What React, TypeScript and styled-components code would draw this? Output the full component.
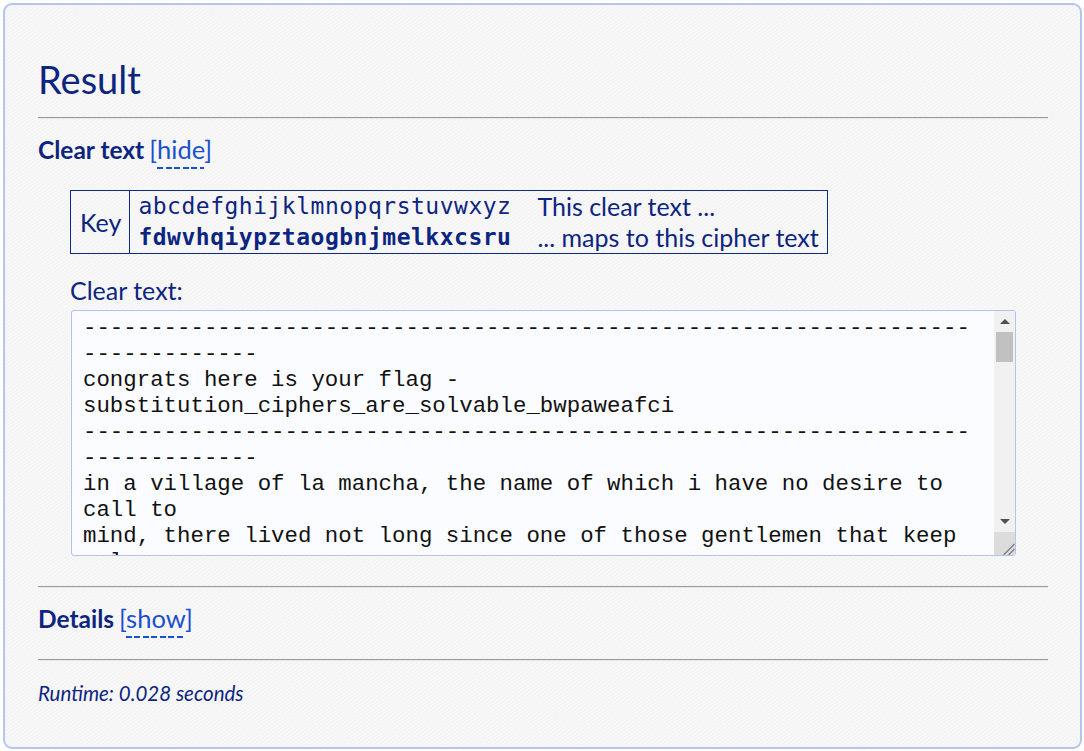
import React from "react";
import styled, { createGlobalStyle } from "styled-components";

const GlobalStyle = createGlobalStyle`
  html, body {
    margin: 0;
    padding: 0;
    background: #ffffff;
  }
  body {
    font-family: Lato, "Noto Sans", sans-serif;
    color: #0c2580;
  }
`;

const Page = styled.div`
  padding: 3px 2px 2px 3px;
`;

const Card = styled.section`
  border: 2px solid #b5c5ef;
  border-radius: 9px;
  background-color: #f6f6f7;
  background-image: repeating-linear-gradient(
    -35deg,
    rgba(255, 255, 255, 0.25) 0px,
    rgba(255, 255, 255, 0.25) 1px,
    rgba(232, 232, 234, 0.18) 2px,
    rgba(232, 232, 234, 0.18) 3px
  );
  padding: 52px 32px 40px 33px;
  min-height: 746px;
  box-sizing: border-box;
`;

const Title = styled.h1`
  margin: 0;
  font-family: Lato, "Noto Sans", sans-serif;
  font-weight: 400;
  font-size: 38px;
  line-height: 44px;
  color: #0c2580;
`;

const Rule = styled.hr<{ $top: number }>`
  margin: ${(p) => p.$top}px 0 0 0;
  border: 0;
  height: 1px;
  background: #9b9b9b;
  border-bottom: 1px solid #e9e9eb;
`;

const SectionHead = styled.div<{ $top: number }>`
  margin-top: ${(p) => p.$top}px;
  font-size: 24.5px;
  line-height: 30px;
  font-weight: 700;
  color: #0c2580;
  display: flex;
  align-items: baseline;
  gap: 5px;
`;

const Toggle = styled.span`
  font-weight: 400;
  font-size: 25.5px;
  color: #1a4fcf;
`;

const ToggleWord = styled.span`
  padding-bottom: 5px;
  background-image: repeating-linear-gradient(
    to right,
    #1a4fd8 0px,
    #1a4fd8 6px,
    transparent 6px,
    transparent 8.5px
  );
  background-size: 100% 2px;
  background-repeat: no-repeat;
  background-position: 0 100%;
`;

const SectionBody = styled.div`
  padding-left: 32px;
`;

const KeyTable = styled.table`
  margin-top: 25px;
  border-collapse: collapse;
  border: 1px solid #0f2a82;
  font-size: 25px;
  color: #0c2580;
`;

const KeyLabel = styled.td`
  border-right: 1px solid #0f2a82;
  padding: 0 8px 0 9px;
  vertical-align: middle;
  line-height: 31px;
`;

const MonoCell = styled.td<{ $bold?: boolean }>`
  font-family: "DejaVu Sans Mono", "Liberation Mono", monospace;
  font-size: 23px;
  letter-spacing: 0.5px;
  font-weight: ${(p) => (p.$bold ? 700 : 400)};
  padding: 0 0 0 8px;
  line-height: 31px;
  white-space: nowrap;
`;

const DescCell = styled.td`
  padding: 0 8px 0 26px;
  line-height: 31px;
  white-space: nowrap;
`;

const FieldLabel = styled.div`
  margin-top: 21px;
  font-size: 25px;
  line-height: 30px;
  color: #0c2580;
`;

const TextFrame = styled.div`
  display: flex;
  margin-top: 5px;
  margin-left: 1px;
  width: 945px;
  height: 246px;
  box-sizing: border-box;
  border: 1px solid #b3c3ef;
  border-radius: 3px;
  background: #fbfcff;
  overflow: hidden;
`;

const TextBox = styled.textarea`
  flex: 1;
  min-width: 0;
  height: 100%;
  box-sizing: border-box;
  margin: 0;
  padding: 4px 14px 0 11px;
  border: 0;
  background: transparent;
  color: #111111;
  font-family: "Liberation Mono", "DejaVu Sans Mono", monospace;
  font-size: 22.4px;
  line-height: 26px;
  outline: none;
  resize: none;
  overflow: hidden;
`;

const ScrollBar = styled.div`
  width: 21px;
  flex: none;
  display: flex;
  flex-direction: column;
  background: #f1f1f1;
`;

const ScrollButton = styled.div`
  height: 21px;
  flex: none;
  display: flex;
  align-items: center;
  justify-content: center;
`;

const ScrollTrack = styled.div`
  flex: 1;
  display: flex;
  flex-direction: column;
  padding: 0 2px;
`;

const ScrollThumb = styled.div`
  height: 30px;
  background: #c1c1c1;
`;

const Resizer = styled.div`
  height: 23px;
  flex: none;
  background: #dcdcdc;
  display: flex;
  align-items: flex-end;
  justify-content: flex-end;
`;

const Runtime = styled.div`
  margin-top: 20px;
  font-style: italic;
  font-size: 20.5px;
  line-height: 24px;
  color: #0c2580;
`;

const dashes = "-".repeat(79);

const clearText = `${dashes}
congrats here is your flag - substitution_ciphers_are_solvable_bwpaweafci
${dashes}
in a village of la mancha, the name of which i have no desire to call to
mind, there lived not long since one of those gentlemen that keep a lance
in the lance-rack, an old buckler, a lean hack, and a greyhound for
coursing. an olla of rather more beef than mutton, a salad on most
nights, scraps on saturdays, lentils on fridays, and a pigeon or so extra
on sundays, made away with three-quarters of his income. the rest of it
went in a doublet of fine cloth and velvet breeches and shoes to match
for holidays, while on week-days he made a brave figure in his best
homespun. he had in his house a housekeeper past forty, a niece under
twenty, and a lad for the field and market-place, who used to saddle the
hack as well as handle the bill-hook. the age of this gentleman of ours
was bordering on fifty; he was of a hardy habit, spare, gaunt-featured, a
very early riser and a great sportsman.
`;

export default function App() {
  return (
    <>
      <GlobalStyle />
      <Page>
        <Card>
          <Title>Result</Title>
          <Rule $top={16} />
          <SectionHead $top={15}>
            <span>Clear text</span>
            <Toggle>
              [<ToggleWord>hide</ToggleWord>]
            </Toggle>
          </SectionHead>
          <SectionBody>
            <KeyTable>
              <tbody>
                <tr>
                  <KeyLabel rowSpan={2}>Key</KeyLabel>
                  <MonoCell>abcdefghijklmnopqrstuvwxyz</MonoCell>
                  <DescCell>This clear text ...</DescCell>
                </tr>
                <tr>
                  <MonoCell $bold>fdwvhqiypztaogbnjmelkxcsru</MonoCell>
                  <DescCell>... maps to this cipher text</DescCell>
                </tr>
              </tbody>
            </KeyTable>
            <FieldLabel>Clear text:</FieldLabel>
            <TextFrame>
              <TextBox readOnly defaultValue={clearText} spellCheck={false} />
              <ScrollBar>
                <ScrollButton>
                  <svg width="10" height="5" viewBox="0 0 10 5">
                    <path d="M0 5 L5 0 L10 5 Z" fill="#505050" />
                  </svg>
                </ScrollButton>
                <ScrollTrack>
                  <ScrollThumb />
                </ScrollTrack>
                <ScrollButton>
                  <svg width="10" height="5" viewBox="0 0 10 5">
                    <path d="M0 0 L10 0 L5 5 Z" fill="#505050" />
                  </svg>
                </ScrollButton>
                <Resizer>
                  <svg width="21" height="23" viewBox="0 0 21 23">
                    <path
                      d="M20.5 12 L9.5 23 M20.5 17 L14.5 23"
                      stroke="#7d7d7d"
                      strokeWidth="1.3"
                      fill="none"
                    />
                  </svg>
                </Resizer>
              </ScrollBar>
            </TextFrame>
          </SectionBody>
          <Rule $top={30} />
          <SectionHead $top={15}>
            <span>Details</span>
            <Toggle>
              [<ToggleWord>show</ToggleWord>]
            </Toggle>
          </SectionHead>
          <Rule $top={25} />
          <Runtime>Runtime: 0.028 seconds</Runtime>
        </Card>
      </Page>
    </>
  );
}
